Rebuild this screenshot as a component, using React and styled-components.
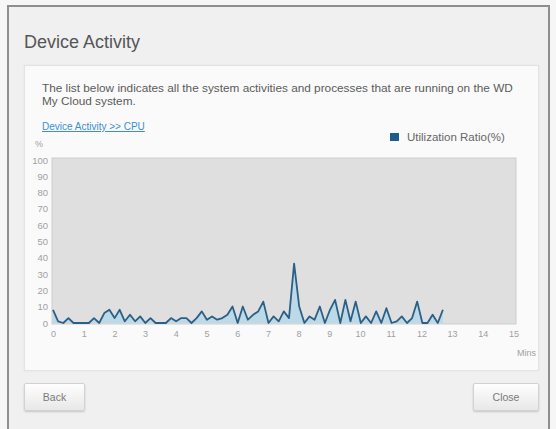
import React from "react";
import styled, { createGlobalStyle } from "styled-components";

const GlobalStyle = createGlobalStyle`
  html, body {
    margin: 0;
    padding: 0;
    background: #f6f6f6;
    font-family: "Liberation Sans", Arial, sans-serif;
  }
`;

const Page = styled.div`
  padding: 5px 0 0 7px;
  height: 424px;
  overflow: hidden;
`;

const Dialog = styled.div`
  box-sizing: border-box;
  width: 543px;
  height: 440px;
  border: 2px solid #8e8e8e;
  border-bottom: none;
  background: #f0f0f0;
  padding: 0 9px 0 15px;
  display: flex;
  flex-direction: column;
`;

const Title = styled.h1`
  margin: 24px 0 12px 0;
  font-size: 18px;
  line-height: 22px;
  font-weight: normal;
  color: #555;
`;

const Panel = styled.div`
  background: #fafafa;
  border: 1px solid #e3e3e3;
  box-shadow: 0 0 2px rgba(0, 0, 0, 0.06);
  padding: 16px 0 8px 17px;
`;

const Description = styled.p`
  margin: 0;
  font-size: 11.8px;
  line-height: 12.5px;
  color: #5a5a5a;
`;

const Link = styled.a`
  display: block;
  margin-top: 14px;
  font-size: 10px;
  line-height: 12px;
  color: #3b8fd4;
  text-decoration: underline;
  width: max-content;
`;

const ChartSvg = styled.svg`
  display: block;
  margin-left: -12px;
  overflow: visible;
`;

const ButtonRow = styled.div`
  display: flex;
  justify-content: space-between;
  align-items: flex-start;
  margin-top: 12px;
`;

const Button = styled.button`
  box-sizing: border-box;
  width: ${(p) => p.$w}px;
  height: 28px;
  border: 1px solid #d2d2d2;
  border-radius: 2px;
  background: linear-gradient(#fefefe, #e8e8e8);
  box-shadow: 0 1px 2px rgba(0, 0, 0, 0.18);
  font-family: "Liberation Sans", Arial, sans-serif;
  font-size: 10.5px;
  color: #7a7a7a;
  padding: 0;
`;

// CPU utilisation samples, one every 10 seconds
const samples = [
  8, 1, 0, 3, 0, 0, 0, 0, 3, 0, 6, 8, 3, 8, 1, 5, 1, 4, 0, 3,
  0, 0, 0, 3, 1, 3, 3, 0, 3, 7, 2, 4, 2, 3, 5, 10, 0, 10, 2, 5,
  7, 13, 0, 4, 1, 7, 3, 36, 10, 0, 4, 2, 10, 0, 8, 14, 0, 14, 1, 13,
  0, 4, 0, 7, 0, 9, 0, 1, 4, 0, 3, 13, 0, 0, 5, 0, 8,
];

const PLOT = { x: 22, y: 25, w: 464, h: 166 };
const px = (i) => 23 + i * 5.13;
const py = (v) => 190 - v * 1.65;

function CpuChart() {
  const line = samples.map((v, i) => `${i ? "L" : "M"}${px(i).toFixed(1)},${py(v).toFixed(1)}`).join(" ");
  const area = `${line} L${px(samples.length - 1).toFixed(1)},190 L${px(0)},190 Z`;
  const yTicks = [100, 90, 80, 70, 60, 50, 40, 30, 20, 10, 0];
  const xTicks = Array.from({ length: 16 }, (_, i) => i);
  const label = { fontFamily: "Liberation Sans, Arial, sans-serif", fontSize: 9, fill: "#a0a0a0" };

  return (
    <ChartSvg width="510" height="229" viewBox="0 0 510 229">
      <rect x="360" y="0" width="9" height="8" fill="#1d5b8c" />
      <text x="377" y="8" style={{ ...label, fontSize: 11.5, fill: "#666" }}>
        Utilization Ratio(%)
      </text>
      <text x="9" y="14" textAnchor="middle" style={label}>%</text>
      {yTicks.map((v) => (
        <text key={v} x="18" y={190 - v * 1.63 + 3.5} textAnchor="end" style={{ ...label, fontSize: 9.5 }}>
          {v}
        </text>
      ))}
      <rect
        x={PLOT.x}
        y={PLOT.y}
        width={PLOT.w}
        height={PLOT.h}
        fill="#dfdfdf"
        stroke="#cdcdcd"
        strokeWidth="1"
      />
      <path d={area} fill="#9fd4ef" fillOpacity="0.55" />
      <path d={line} fill="none" stroke="#2b5f86" strokeWidth="1.8" strokeLinejoin="round" />
      {xTicks.map((t) => (
        <text key={t} x={23.5 + t * 30.7} y="203.5" textAnchor="middle" style={label}>
          {t}
        </text>
      ))}
      <text x="506" y="223" textAnchor="end" style={label}>Mins</text>
    </ChartSvg>
  );
}

export default function App() {
  return (
    <>
      <GlobalStyle />
      <Page>
        <Dialog>
          <Title>Device Activity</Title>
          <Panel>
            <Description>
              The list below indicates all the system activities and processes that are running on the WD
              <br />
              My Cloud system.
            </Description>
            <Link href="#">Device Activity &gt;&gt; CPU</Link>
            <CpuChart />
          </Panel>
          <ButtonRow>
            <Button $w={61}>Back</Button>
            <Button $w={66}>Close</Button>
          </ButtonRow>
        </Dialog>
      </Page>
    </>
  );
}
